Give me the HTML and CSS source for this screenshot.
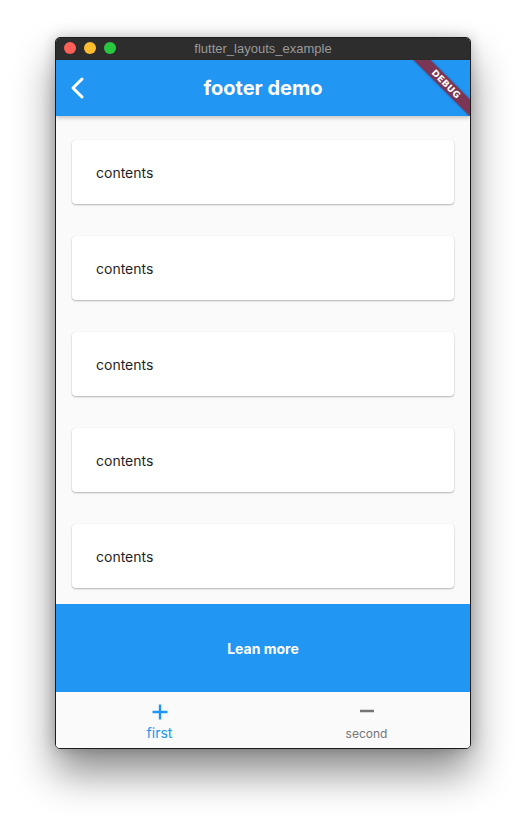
FILE: index.html
```html
<!DOCTYPE html>
<html>
<head>
<meta charset="utf-8">
<link rel="stylesheet" href="styles.css">
</head>
<body>
<div class="window">
  <div class="titlebar">
    <div class="lights">
      <span class="light red"></span>
      <span class="light yellow"></span>
      <span class="light green"></span>
    </div>
    <div class="wintitle">flutter_layouts_example</div>
  </div>
  <div class="app">
    <header class="appbar">
      <svg class="back" width="24" height="24" viewBox="0 0 24 24"><polyline points="16,3 7,12 16,21" fill="none" stroke="#fff" stroke-width="3" stroke-linecap="round" stroke-linejoin="round"/></svg>
      <div class="apptitle">footer demo</div>
      <div class="debug">DEBUG</div>
    </header>
    <main class="list">
      <div class="card">contents</div>
      <div class="card">contents</div>
      <div class="card">contents</div>
      <div class="card">contents</div>
      <div class="card">contents</div>
    </main>
    <div class="footer">Lean more</div>
    <nav class="nav">
      <div class="navitem active">
        <svg width="24" height="24" viewBox="0 0 24 24"><path d="M12 4.5v15M4.5 12h15" stroke="#2196F3" stroke-width="2.4"/></svg>
        <span class="lbl">first</span>
      </div>
      <div class="navitem">
        <svg width="24" height="24" viewBox="0 0 24 24"><path d="M5 11h14" stroke="#757575" stroke-width="2.4"/></svg>
        <span class="lbl">second</span>
      </div>
    </nav>
  </div>
</div>
</body>
</html>
```

FILE: styles.css
```css
html, body {
  margin: 0;
  background: #ffffff;
}
body {
  padding: 37px 0 0 55px;
  width: 526px;
  height: 822px;
  box-sizing: border-box;
  overflow: hidden;
  font-family: Inter, Roboto, "Noto Sans", sans-serif;
}
.window {
  width: 416px;
  height: 712px;
  box-sizing: border-box;
  border: 1px solid #1c1c1c;
  border-radius: 5px;
  overflow: hidden;
  display: flex;
  flex-direction: column;
  box-shadow: 0 24px 40px rgba(0,0,0,0.45), 0 0 14px rgba(0,0,0,0.22);
  background: #fafafa;
}
.titlebar {
  height: 22px;
  flex: none;
  background: #2d2d2d;
  position: relative;
  display: flex;
  align-items: center;
  justify-content: center;
}
.lights {
  position: absolute;
  left: 8px;
  top: 4px;
  display: flex;
  gap: 8px;
}
.light {
  width: 12px;
  height: 12px;
  border-radius: 50%;
  display: block;
}
.red { background: #fe5f57; }
.yellow { background: #febc2e; }
.green { background: #28c840; }
.wintitle {
  color: #9a9a9a;
  font-family: "Liberation Sans", Arial, sans-serif;
  font-size: 13px;
  line-height: 22px;
}
.app {
  flex: 1;
  display: flex;
  flex-direction: column;
  min-height: 0;
}
.appbar {
  height: 56px;
  flex: none;
  background: #2196F3;
  position: relative;
  overflow: hidden;
  display: flex;
  align-items: center;
  justify-content: center;
  box-shadow: 0 2px 4px rgba(0,0,0,0.22);
  z-index: 2;
}
.back {
  position: absolute;
  left: 10px;
  top: 16px;
}
.apptitle {
  color: #fff;
  font-size: 20px;
  font-weight: 700;
}
.debug {
  position: absolute;
  right: -16px;
  top: 18px;
  width: 80px;
  height: 12px;
  transform: rotate(45deg);
  background: #7b3656;
  color: #fff;
  font-family: "DejaVu Sans", sans-serif;
  font-size: 9px;
  font-weight: 900;
  line-height: 12px;
  text-align: center;
  letter-spacing: 0.3px;
  box-shadow: 0 0 3px rgba(0,0,0,0.25);
}
.list {
  flex: 1;
  display: flex;
  flex-direction: column;
  gap: 32px;
  padding: 24px 16px 16px;
  background: #fafafa;
}
.card {
  height: 64px;
  flex: none;
  background: #fff;
  border-radius: 4px;
  box-shadow: 0 1px 2px rgba(0,0,0,0.28), 0 0 1px rgba(0,0,0,0.08);
  display: flex;
  align-items: center;
  padding: 0 0 0 24px;
  box-sizing: border-box;
  font-size: 14px;
  color: #1f1f1f;
}
.footer {
  height: 88px;
  flex: none;
  background: #2196F3;
  color: #fff;
  font-size: 14px;
  font-weight: 700;
  display: flex;
  align-items: center;
  justify-content: center;
}
.nav {
  height: 56px;
  flex: none;
  background: #fafafa;
  display: flex;
}
.navitem {
  flex: 1;
  display: flex;
  flex-direction: column;
  align-items: center;
  padding-top: 8px;
  color: #757575;
}
.navitem .lbl {
  font-size: 12px;
  line-height: 16px;
  margin-top: 2px;
}
.navitem.active {
  color: #2196F3;
}
.navitem.active .lbl {
  font-size: 14px;
  line-height: 16px;
  margin-top: 1px;
}
```
